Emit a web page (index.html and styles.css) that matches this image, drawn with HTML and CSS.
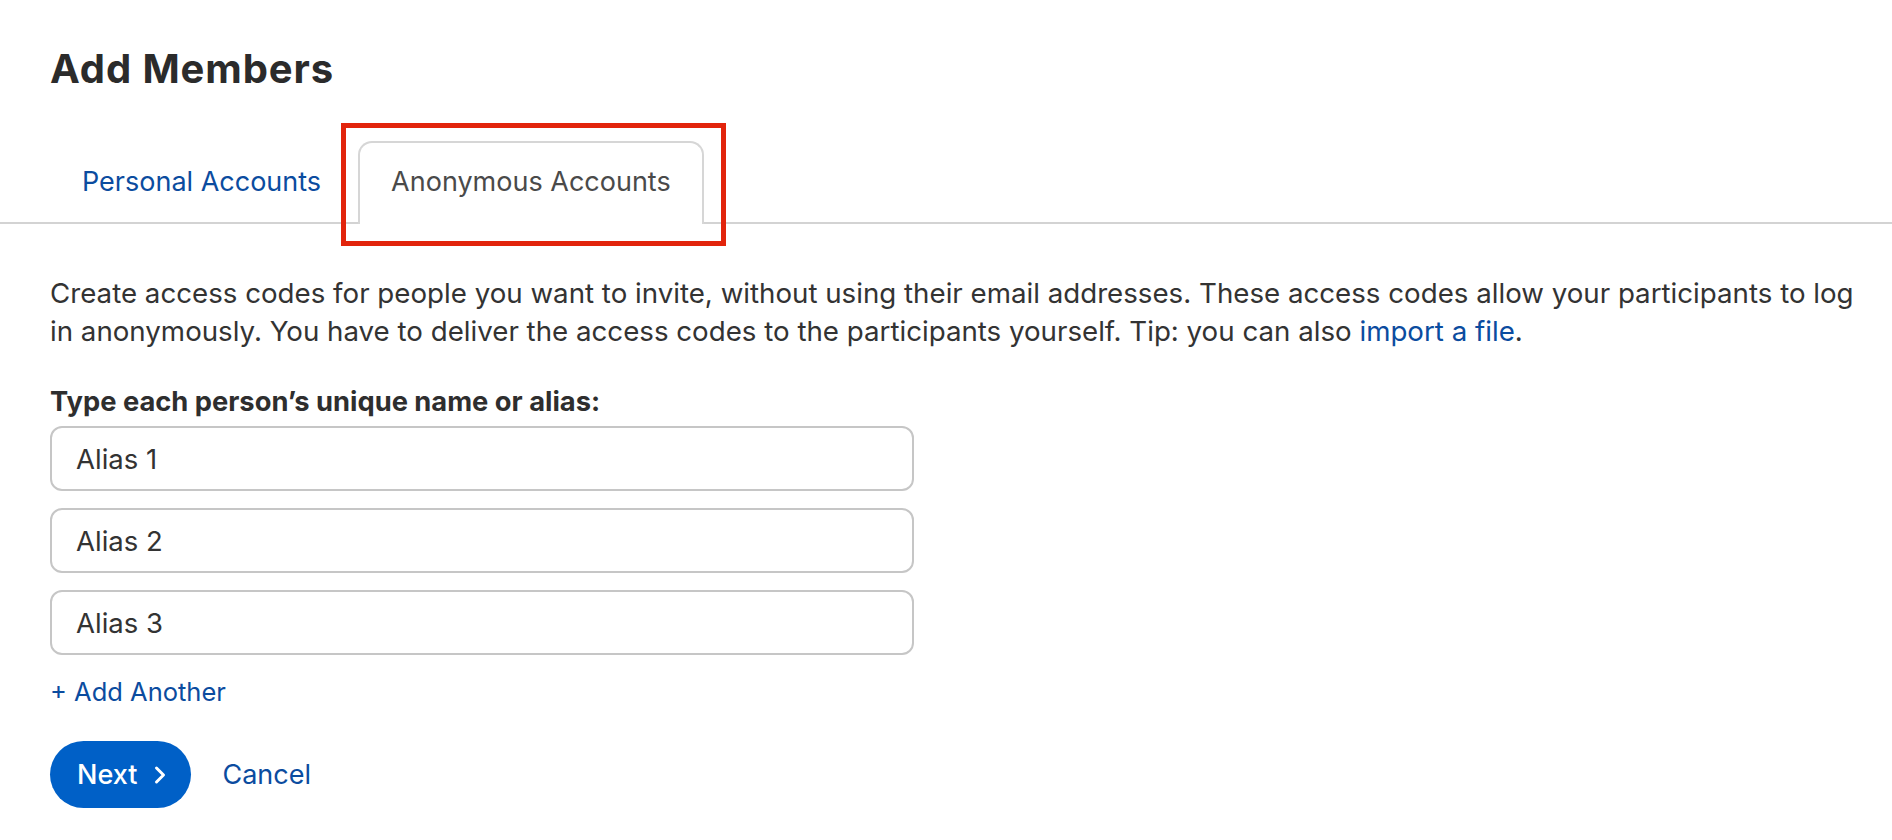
FILE: index.html
```html
<!DOCTYPE html>
<html lang="en">
<head>
<meta charset="utf-8">
<title>Add Members</title>
<link rel="stylesheet" href="styles.css">
</head>
<body>
<div class="page">
  <h1 class="title">Add Members</h1>
  <div class="tabs">
    <a class="tab" href="#">Personal Accounts</a>
    <a class="tab tab-active" href="#">Anonymous Accounts</a>
  </div>
  <div class="content">
    <p class="desc">Create access codes for people you want to invite, without using their email addresses. These access codes allow your participants to log in anonymously. You have to deliver the access codes to the participants yourself. Tip: you can also <a class="link" href="#">import a file</a>.</p>
    <div class="label">Type each person’s unique name or alias:</div>
    <div class="fields">
      <div class="field">Alias 1</div>
      <div class="field">Alias 2</div>
      <div class="field">Alias 3</div>
    </div>
    <a class="add" href="#">+ Add Another</a>
    <div class="actions">
      <button class="btn-next" type="button">Next <svg class="chev" width="12" height="20" viewBox="0 0 12 20"><polyline points="2.5,3 9.5,10 2.5,17" fill="none" stroke="#fff" stroke-width="3" stroke-linecap="round" stroke-linejoin="round"/></svg></button>
      <a class="cancel" href="#">Cancel</a>
    </div>
  </div>
</div>
</body>
</html>
```
FILE: styles.css
```css
html, body {
  margin: 0;
  padding: 0;
  background: #ffffff;
}
body {
  font-family: Inter, "Liberation Sans", Arial, sans-serif;
  color: #333333;
  font-size: 27.7px;
}
.page {
  width: 1892px;
}
.title {
  margin: 45px 0 0 50px;
  font-size: 40px;
  line-height: 48px;
  font-weight: 700;
  letter-spacing: 0.9px;
  color: #2b2b2b;
}
.tabs {
  display: flex;
  gap: 4px;
  padding-left: 50px;
  margin-top: 48px;
  border-bottom: 2px solid #d3d3d3;
}
.tab {
  display: block;
  padding: 22px 31px 23px;
  line-height: 34px;
  font-size: 27px;
  color: #0b4c9f;
  text-decoration: none;
  border: 2px solid transparent;
  border-bottom: none;
  margin-bottom: -2px;
  border-radius: 14px 14px 0 0;
}
.tab:first-child {
  padding-left: 30px;
}
.tab-active {
  position: relative;
  color: #4a4a4a;
  border-color: #d6d6d6;
  background: #ffffff;
  padding-bottom: 25px;
}
.tab-active::after {
  content: "";
  position: absolute;
  left: -19px;
  top: -20px;
  right: -24px;
  bottom: -22px;
  border: 5px solid #e2240c;
}
.content {
  padding-left: 50px;
}
.desc {
  margin: 50px 0 0;
  width: 1830px;
  line-height: 38px;
  color: #333333;
}
.link {
  color: #0b4c9f;
  text-decoration: none;
}
.label {
  margin-top: 35px;
  font-weight: 700;
  font-size: 27.3px;
  line-height: 34px;
  color: #2e2e2e;
}
.fields {
  display: flex;
  flex-direction: column;
  gap: 17px;
  margin-top: 7px;
}
.field {
  box-sizing: border-box;
  width: 864px;
  height: 65px;
  border: 2px solid #c6c6c6;
  border-radius: 12px;
  padding: 0 24px;
  display: flex;
  align-items: center;
  font-size: 27.5px;
  color: #333333;
}
.add {
  display: inline-block;
  margin-top: 20px;
  line-height: 34px;
  font-size: 25.5px;
  color: #0b4c9f;
  text-decoration: none;
}
.actions {
  display: flex;
  align-items: center;
  gap: 31px;
  margin-top: 32px;
}
.btn-next {
  display: flex;
  align-items: center;
  gap: 17px;
  height: 67px;
  padding: 0 25px 0 27px;
  border: none;
  border-radius: 34px;
  background: #0060c7;
  color: #ffffff;
  font-family: inherit;
  font-size: 27px;
  font-weight: 500;
}
.chev {
  display: block;
}
.cancel {
  color: #0b4c9f;
  text-decoration: none;
  font-size: 27px;
  line-height: 34px;
}
```
